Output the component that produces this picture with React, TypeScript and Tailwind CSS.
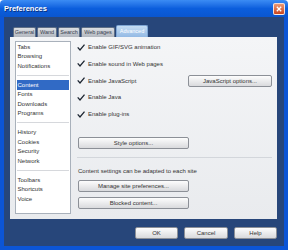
import type { ReactNode } from "react";

const GROUPS = [
  ["Tabs", "Browsing", "Notifications"],
  ["Content", "Fonts", "Downloads", "Programs"],
  ["History", "Cookies", "Security", "Network"],
  ["Toolbars", "Shortcuts", "Voice"],
];

const TABS = [
  { label: "General", w: "w-[23px]" },
  { label: "Wand", w: "w-[20px]" },
  { label: "Search", w: "w-[22px]" },
  { label: "Web pages", w: "w-[34px]" },
];

const OPTIONS = [
  "Enable GIF/SVG animation",
  "Enable sound in Web pages",
  "Enable JavaScript",
  "Enable Java",
  "Enable plug-ins",
];

function Check() {
  return (
    <svg width="8" height="7" viewBox="0 0 8 7" className="shrink-0">
      <path d="M0.7 3.4 L3 6 L7.5 0.7" fill="none" stroke="#1b2430" strokeWidth="1.3" />
    </svg>
  );
}

function Btn({ children, className = "" }: { children: ReactNode; className?: string }) {
  return (
    <div
      className={`flex items-center justify-center h-[12px] border border-[#8c9097] rounded-[2px] bg-linear-to-b from-[#fdfdfd] to-[#d9dadd] text-[6px] text-[#333] leading-none ${className}`}
    >
      {children}
    </div>
  );
}

export default function App() {
  return (
    <div className="w-[288px] h-[250px] flex flex-col font-['Liberation_Sans',Arial,sans-serif] select-none">
      {/* Title bar */}
      <div className="h-[17px] shrink-0 flex items-center justify-between pl-[4px] pr-[3px] rounded-t-[4px] bg-linear-to-b from-[#3b8cf4] via-[#0b5edd] to-[#0a56cf]">
        <span className="text-white font-bold text-[7.5px] leading-none [text-shadow:1px_1px_0_#0a2f7a]">
          Preferences
        </span>
        <div className="w-[12px] h-[12px] rounded-[2px] border border-white/80 bg-linear-to-b from-[#ec9872] to-[#c8431c] flex items-center justify-center">
          <svg width="6" height="6" viewBox="0 0 6 6">
            <path d="M0.8 0.8 L5.2 5.2 M5.2 0.8 L0.8 5.2" stroke="#fff" strokeWidth="1.3" />
          </svg>
        </div>
      </div>

      {/* Body */}
      <div className="flex-1 flex flex-col bg-[#27467a] border-x-[4px] border-b-[4px] border-[#0c55d6] pl-[6px] pr-[7px]">
        {/* Tabs */}
        <div className="mt-[8px] h-[12px] flex items-end gap-[1px] pl-[3px]">
          {TABS.map((t) => (
            <div
              key={t.label}
              className={`${t.w} h-[10px] flex items-center justify-center rounded-t-[2px] border border-b-0 border-[#5f6f86] bg-linear-to-b from-[#dcdfe3] to-[#b2b7bf] text-[5.5px] text-[#3a4350] leading-none`}
            >
              {t.label}
            </div>
          ))}
          <div className="w-[32px] h-[12px] flex items-center justify-center rounded-t-[2px] border border-b-0 border-[#7fa6d4] bg-linear-to-b from-[#c4dcf4] to-[#93b9e4] text-[5.5px] text-white leading-none">
            Advanced
          </div>
        </div>

        {/* Panel */}
        <div className="h-[182px] flex bg-linear-to-b from-[#f4f5f7] to-[#e9ebee] pt-[4px] px-[5px] pb-[5px]">
          {/* Section list */}
          <div className="w-[56px] bg-white border border-[#a9b1bb] pl-[0.5px] pr-[1px]">
            {GROUPS.map((g, gi) => (
              <div key={gi}>
                {gi > 0 && (
                  <div className="h-[9.5px] flex items-center">
                    <div className="h-px w-full bg-[#d6d8dc]" />
                  </div>
                )}
                {g.map((item) => (
                  <div
                    key={item}
                    className={`h-[9.5px] flex items-center pl-[1px] text-[6px] leading-none ${
                      item === "Content" ? "bg-[#316ac5] text-white" : "text-[#333]"
                    }`}
                  >
                    {item}
                  </div>
                ))}
              </div>
            ))}
          </div>

          {/* Options */}
          <div className="flex-1 ml-[6px] flex flex-col">
            <div className="flex flex-col gap-[4.75px]">
              {OPTIONS.map((o) => (
                <div key={o} className="h-[12px] flex items-center">
                  <Check />
                  <span className="ml-[3px] text-[6px] text-[#333] leading-none">{o}</span>
                  {o === "Enable JavaScript" && <Btn className="ml-auto w-[84px]">JavaScript options...</Btn>}
                </div>
              ))}
            </div>

            <Btn className="mt-[17px] ml-[1px] w-[111px]">Style options...</Btn>

            <div className="mt-[8px] h-px bg-[#d3d6db]" />

            <div className="mt-[9px] h-[8px] flex items-center ml-[1px] text-[6px] text-[#333] leading-none">
              Content settings can be adapted to each site
            </div>

            <Btn className="mt-[5px] ml-[1px] w-[111px]">Manage site preferences...</Btn>
            <Btn className="mt-[5px] ml-[1px] w-[111px]">Blocked content...</Btn>
          </div>
        </div>

        {/* Footer buttons */}
        <div className="mt-[8px] flex justify-end gap-[6px]">
          <Btn className="w-[43px]">OK</Btn>
          <Btn className="w-[44px]">Cancel</Btn>
          <Btn className="w-[43px]">Help</Btn>
        </div>
      </div>
    </div>
  );
}
